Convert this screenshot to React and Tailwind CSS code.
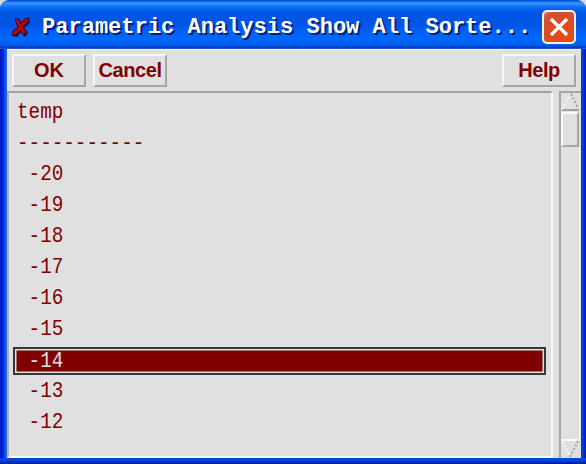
const values = [-20, -19, -18, -17, -16, -15, -14, -13, -12];
const selected = -14;

function ToolButton({ children, className = '' }) {
  return (
    <button
      className={`flex h-[33px] w-[74px] items-center justify-center border-2 border-t-[#f5f5f5] border-l-[#f5f5f5] border-r-[#a6a6a6] border-b-[#a6a6a6] bg-[#e0e0e0] pb-px font-['Liberation_Sans',sans-serif] text-[20px] leading-none font-bold text-[#800000] ${className}`}
    >
      {children}
    </button>
  );
}

function TitleBar() {
  return (
    <header className="flex h-[49px] shrink-0 items-center rounded-t-[9px] bg-[linear-gradient(180deg,#0050d8_0px,#0058e6_1px,#3f96ff_3px,#2482fb_5px,#0568f2_8px,#0054e2_13px,#0055e5_25px,#0064fa_34px,#0068ff_40px,#005df1_45px,#0039b8_48px,#496fc7_49px)] pr-[9px] pl-[11px]">
      <svg className="mt-[6px] h-[21px] w-[20px] shrink-0" viewBox="0 0 20 21">
        <path d="M5 3L9 3L11 8L15 3L19 4L18 7L13 11L17 16L14 20L10 15L6 20L2 19L3 15L8 11Z" fill="#10184b" />
        <path d="M4 2L8 2L10 7L14 1.5L18 1L17 5L12 10L16 15L13 18.5L9 14L5 18L1 18.5L2 14L7 10Z" fill="#a00505" stroke="#38051b" strokeWidth="1" />
        <path d="M5.5 3L9 9L13 16M16 2.5L9 10L3 16.5" stroke="#bd0905" strokeWidth="2" fill="none" />
      </svg>
      <h1 className="mt-[7px] ml-[11px] w-[500px] shrink-0 font-['Liberation_Mono',monospace] text-[22px] leading-[28px] font-bold tracking-[0.02px] whitespace-pre text-white [text-shadow:2px_2px_0_#06207c]">
        Parametric Analysis Show All Sorte...
      </h1>
      <button className="mt-[5px] flex h-[34px] w-[34px] shrink-0 items-center justify-center rounded-[5px] border-2 border-[#f7eeee] bg-[radial-gradient(circle_at_65%_75%,#ea4a16_0%,#df4a22_45%,#cf5235_80%,#df8069_100%)]">
        <svg viewBox="0 0 20 20" className="h-[20px] w-[20px]">
          <path d="M2 2L18 18M18 2L2 18" stroke="white" strokeWidth="3.2" />
        </svg>
      </button>
    </header>
  );
}

function ScrollBar() {
  return (
    <div className="flex w-[22px] shrink-0 flex-col border-t-2 border-l-2 border-[#a6a6a6]">
      <svg className="h-[18px] w-[19px] shrink-0" viewBox="0 0 19 18">
        <path d="M1 16L9 1" stroke="#fafafa" strokeWidth="2" strokeDasharray="2 2" />
        <path d="M10 1L17 15" stroke="#a0a0a0" strokeWidth="2" strokeDasharray="2 2" />
        <path d="M1 17H18" stroke="#a0a0a0" strokeWidth="2" />
      </svg>
      <div className="mt-[1px] h-[35px] w-[18px] border-2 border-t-[#fafafa] border-l-[#fafafa] border-r-[#a6a6a6] border-b-[#a6a6a6]" />
      <div className="mr-px flex-1 border-r border-[#fafafa]" />
      <svg className="h-[19px] w-[19px] shrink-0" viewBox="0 0 19 19">
        <path d="M0 1H18" stroke="#fafafa" strokeWidth="2" />
        <path d="M1 3L9 17" stroke="#fafafa" strokeWidth="2" strokeDasharray="2 2" />
        <path d="M17 2L9 18" stroke="#a0a0a0" strokeWidth="2" strokeDasharray="2 2" />
      </svg>
    </div>
  );
}

function Line({ children, active }) {
  return (
    <div className="flex h-[31.1px] items-center">
      <div
        className={
          active
            ? 'mt-[1px] h-[28px] w-[533px] border-2 border-[#343939] bg-[#800000] bg-clip-padding text-[#e0e0e0] shadow-[inset_0_0_0_1.5px_#e0e0e0]'
            : 'h-[28px] w-[533px] border-2 border-transparent text-[#800000]'
        }
      >
        <div className="origin-center scale-y-[1.15] pl-[2px] text-[19.3px] leading-[24px] whitespace-pre">
          {children}
        </div>
      </div>
    </div>
  );
}

export default function App() {
  return (
    <div className="h-[464px] w-[586px] overflow-hidden bg-[#d4d9e0]">
      <div className="flex h-full flex-col overflow-hidden rounded-t-[9px] bg-[linear-gradient(180deg,#0048e4_0px,#0048e4_459px,#003edb_461px,#001493_464px)]">
        <TitleBar />
        <div className="mb-[6px] flex min-h-0 flex-1 bg-[linear-gradient(90deg,#0018c4_0px,#0026d8_3px,#1267ee_6px,#2860d8_7px,#0038da_580px,#0040df_583px,#0010a8_586px)] pr-[5px] pl-[7px]">
          <main className="flex min-w-0 flex-1 flex-col bg-[#e0e0e0]">
            <div className="flex h-[42px] shrink-0 items-start border-t border-[#f4f4f4] pt-[4px] pr-[5px] pl-[5px]">
              <ToolButton>OK</ToolButton>
              <ToolButton className="ml-[7px] tracking-[-0.4px]">Cancel</ToolButton>
              <ToolButton className="ml-auto tracking-[-0.4px]">Help</ToolButton>
            </div>
            <div className="flex min-h-0 flex-1">
              <section className="w-[546px] shrink-0 border-2 border-t-[#a0a0a0] border-l-[#b0b0b0] border-r-[#fafafa] border-b-[#fafafa] pt-[3px] pl-[4px] font-['Liberation_Mono',monospace]">
                <Line>temp</Line>
                <Line>-----------</Line>
                {values.map((value) => (
                  <Line key={value} active={value === selected}>
                    {` ${value}`}
                  </Line>
                ))}
              </section>
              <div className="flex-1" />
              <ScrollBar />
            </div>
          </main>
        </div>
      </div>
    </div>
  );
}
